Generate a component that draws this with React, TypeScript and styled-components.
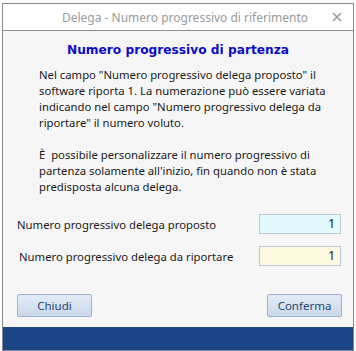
import { FC } from 'react';
import styled, { createGlobalStyle } from 'styled-components';

const Global = createGlobalStyle`
body{
    margin:0;
    background:#ffffff;
    font-family:"Noto Sans", "Open Sans", sans-serif;
}
`;

const Page = styled.div`
width:356px;
height:351px;
padding:3px 1px 0 2px;
box-sizing:border-box;
background:#fdfdfd;
`;

const Dialog = styled.div`
width:352px;
height:348px;
box-sizing:border-box;
border:1px solid #8a8a8a;
display:flex;
flex-direction:column;
background:#f6f6f6;
`;

const TitleBar = styled.div`
height:26px;
flex:none;
background:#ffffff;
border-bottom:1px solid #8f8f8f;
display:flex;
align-items:center;
justify-content:center;
padding-left:14px;
position:relative;
font-size:12px;
color:#9a9a9a;
`;

const Close = styled.div`
position:absolute;
right:9px;
top:6px;
width:14px;
height:14px;
`;

const Body = styled.div`
flex:1;
display:flex;
flex-direction:column;
padding:12px 14px 0 14px;
`;

const Heading = styled.div`
text-align:center;
font-family:"DejaVu Sans", sans-serif;
font-weight:bold;
font-size:12.2px;
color:#0b0bc8;
margin-bottom:10px;
`;

const Paragraph = styled.p`
margin:0 0 16px 22px;
font-size:11.3px;
line-height:16px;
color:#1a1a1a;
`;

const FieldRow = styled.div<{ $gap: number; $indent?: number }>`
display:flex;
align-items:center;
justify-content:space-between;
height:20px;
margin-top:${p => p.$gap}px;
margin-right:-2px;
padding-left:${p => p.$indent ?? 0}px;
font-size:11.3px;
color:#1a1a1a;
`;

const NumberBox = styled.div<{ $bg: string }>`
width:82px;
height:20px;
box-sizing:border-box;
border:1px solid #b9c8d2;
background:${p => p.$bg};
text-align:right;
padding-right:5px;
font-size:12px;
line-height:18px;
color:#111;
`;

const Buttons = styled.div`
display:flex;
justify-content:space-between;
margin-top:28px;
margin-right:-3px;
`;

const Button = styled.div`
width:75px;
height:23px;
box-sizing:border-box;
border:1px solid #9fb3cf;
border-radius:2px;
background:linear-gradient(#e3ebf6, #cbd9ec);
color:#2a4670;
font-size:11.5px;
display:flex;
align-items:center;
justify-content:center;
`;

const Footer = styled.div`
height:23px;
flex:none;
background:#1c4586;
`;

const App: FC = () => {
    return (
        <>
            <Global />
            <Page>
                <Dialog>
                    <TitleBar>
                        Delega - Numero progressivo di riferimento
                        <Close>
                            <svg width="14" height="14" viewBox="0 0 14 14">
                                <path d="M3 3 L11 11 M11 3 L3 11" stroke="#9a9a9a" strokeWidth="1.6" />
                            </svg>
                        </Close>
                    </TitleBar>
                    <Body>
                        <Heading>Numero progressivo di partenza</Heading>
                        <Paragraph>
                            Nel campo "Numero progressivo delega proposto" il software riporta 1. La numerazione può essere variata indicando nel campo "Numero progressivo delega da riportare" il numero voluto.
                        </Paragraph>
                        <Paragraph>
                            È&nbsp; possibile personalizzare il numero progressivo di partenza solamente all'inizio, fin quando non è stata predisposta alcuna delega.
                        </Paragraph>
                        <FieldRow $gap={3}>
                            Numero progressivo delega proposto
                            <NumberBox $bg="#e2f9fd">1</NumberBox>
                        </FieldRow>
                        <FieldRow $gap={12} $indent={2}>
                            Numero progressivo delega da riportare
                            <NumberBox $bg="#fefae0">1</NumberBox>
                        </FieldRow>
                        <Buttons>
                            <Button>Chiudi</Button>
                            <Button>Conferma</Button>
                        </Buttons>
                    </Body>
                    <Footer />
                </Dialog>
            </Page>
        </>
    );
}

export default App;
